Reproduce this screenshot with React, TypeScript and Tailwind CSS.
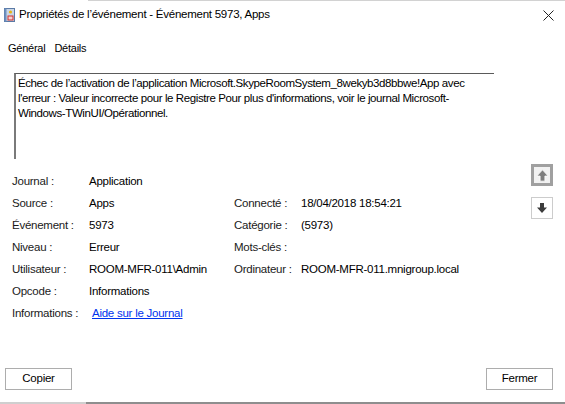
import React from "react";

function EventIcon() {
  return (
    <svg width="11" height="14" viewBox="0 0 11 14">
      <rect x="0.5" y="0.5" width="10" height="13" fill="#c9d6e6" stroke="#5a7aa6" />
      <rect x="0.5" y="0.5" width="2" height="13" fill="#6d8fbf" />
      <circle cx="6.5" cy="4" r="1.6" fill="#e7b416" />
      <rect x="4" y="8" width="5" height="4" fill="#f5d0d0" stroke="#d0312d" />
    </svg>
  );
}

function CloseIcon() {
  return (
    <svg width="11" height="11" viewBox="0 0 11 11">
      <path d="M0.5 0.5 L10.5 10.5 M10.5 0.5 L0.5 10.5" stroke="#222" strokeWidth="1" />
    </svg>
  );
}

function UpArrow() {
  return (
    <svg width="13" height="13" viewBox="0 0 12 12">
      <path d="M6 0.8 L11.2 6.5 L8.2 6.5 L8.2 11.2 L3.8 11.2 L3.8 6.5 L0.8 6.5 Z" fill="#7e7e7e" stroke="#ffffff" strokeWidth="0.7" />
    </svg>
  );
}

function DownArrow() {
  return (
    <svg width="12" height="12" viewBox="0 0 12 12">
      <path d="M4 1 L8 1 L8 5.5 L11 5.5 L6 11 L1 5.5 L4 5.5 Z" fill="#3c3c3c" />
    </svg>
  );
}

const rows: [string, React.ReactNode, string, string][] = [
  ["Journal :", "Application", "", ""],
  ["Source :", "Apps", "Connecté :", "18/04/2018 18:54:21"],
  ["Événement :", "5973", "Catégorie :", "(5973)"],
  ["Niveau :", "Erreur", "Mots-clés :", ""],
  ["Utilisateur :", "ROOM-MFR-011\\Admin", "Ordinateur :", "ROOM-MFR-011.mnigroup.local"],
  ["Opcode :", "Informations", "", ""],
];

export default function App() {
  return (
    <div
      className="w-[565px] h-[404px] bg-white flex flex-col overflow-hidden text-[11.5px] tracking-[-0.25px] text-black"
      style={{ fontFamily: '"Segoe UI", "Liberation Sans", Arial, sans-serif' }}
    >
      {/* window edge behind */}
      <div className="h-px ml-[88px] bg-[#d2d2d2]" />

      {/* Title bar */}
      <div className="flex items-center h-[28px] pl-[4px] pr-[11px]">
        <EventIcon />
        <span className="ml-[4px] text-[11.5px]">Propriétés de l’événement - Événement 5973, Apps</span>
        <div className="ml-auto">
          <CloseIcon />
        </div>
      </div>

      {/* Tabs */}
      <div className="flex items-center h-[16px] mt-[11px] pl-[8px] gap-[9px] text-[11px]">
        <span>Général</span>
        <span>Détails</span>
      </div>

      {/* Message box */}
      <div className="ml-[14px] mt-[17px] w-[480px] h-[86px] border-l-2 border-t border-l-[#7a7a7a] border-t-[#5a5a5a] pl-[2px] pt-[2px] leading-[15px] tracking-[-0.4px]">
        <div className="whitespace-nowrap">Échec de l’activation de l’application Microsoft.SkypeRoomSystem_8wekyb3d8bbwe!App avec</div>
        <div className="whitespace-nowrap">l'erreur : Valeur incorrecte pour le Registre Pour plus d'informations, voir le journal Microsoft-</div>
        <div className="whitespace-nowrap">Windows-TWinUI/Opérationnel.</div>
      </div>

      {/* Details */}
      <div className="flex mt-[5px]">
        <div className="flex-1 pl-[12px] pt-[7px]">
          <div className="grid grid-cols-[77px_145px_67px_1fr] auto-rows-[22px] items-center">
            {rows.map(([l1, v1, l2, v2]) => (
              <React.Fragment key={l1}>
                <span className="text-[#1a1a1a]">{l1}</span>
                <span>{v1}</span>
                <span className="text-[#1a1a1a]">{l2}</span>
                <span>{v2}</span>
              </React.Fragment>
            ))}
            <span className="text-[#1a1a1a] whitespace-nowrap">Informations :</span>
            <span className="pl-[3px]">
              <a className="text-[#0033ee] underline" href="#">Aide sur le Journal</a>
            </span>
          </div>
        </div>
        <div className="flex flex-col items-center w-[22px] mr-[12px] gap-[11px]">
          <div className="w-[22px] h-[22px] border-[3px] border-[#a0a0a0] bg-[#f2f2f2] flex items-center justify-center">
            <UpArrow />
          </div>
          <div className="w-[22px] h-[22px] border border-[#cccccc] bg-white flex items-center justify-center">
            <DownArrow />
          </div>
        </div>
      </div>

      {/* Buttons */}
      <div className="mt-auto mb-[12px] flex justify-between px-[5px] pr-[12px]">
        <button className="w-[67px] h-[22px] border border-[#adadad] bg-white text-[11.5px]">Copier</button>
        <button className="w-[67px] h-[22px] border border-[#adadad] bg-white text-[11.5px]">Fermer</button>
      </div>

      {/* window behind */}
      <div className="flex h-[2px]">
        <div className="w-[86px] bg-[#cfcfcf]" />
        <div className="flex-1 bg-[#8e8e8e]" />
      </div>
    </div>
  );
}
